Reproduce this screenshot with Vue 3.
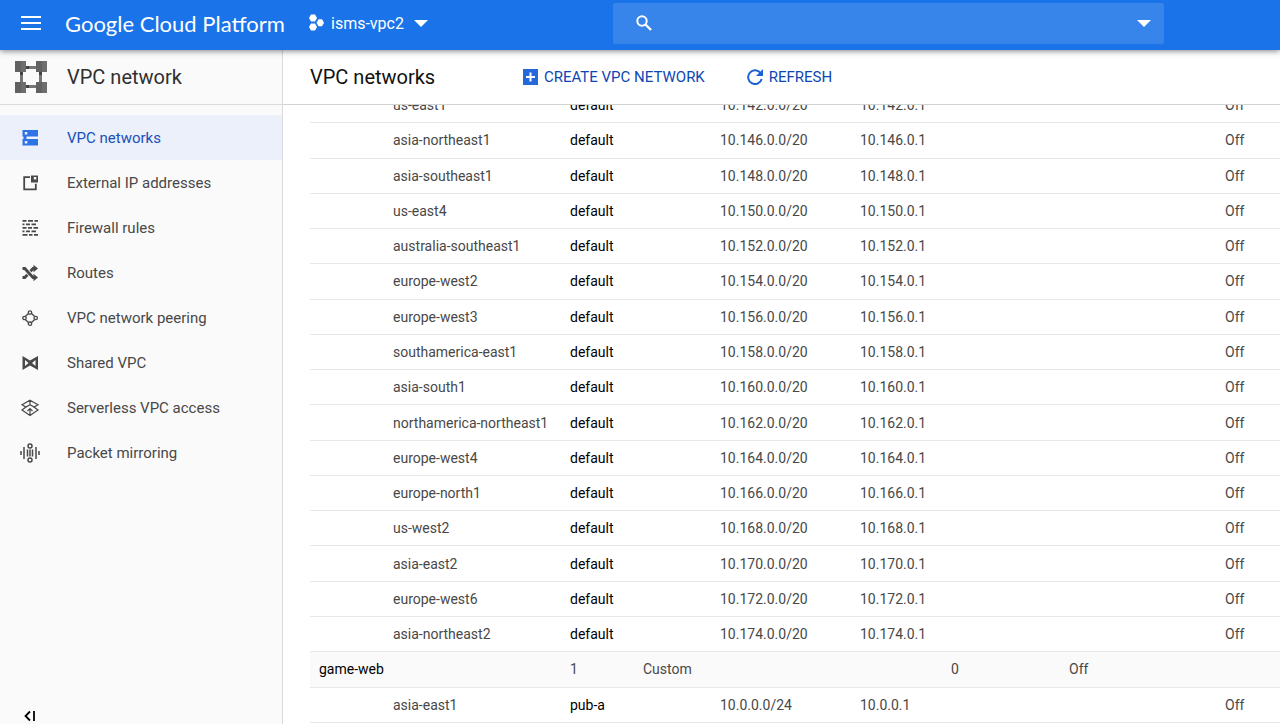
<script setup>
import { ref } from "vue";

const query = ref("");
const active = ref("VPC networks");

const navItems = [
  { label: "VPC networks", icon: "networks" },
  { label: "External IP addresses", icon: "external" },
  { label: "Firewall rules", icon: "firewall" },
  { label: "Routes", icon: "routes" },
  { label: "VPC network peering", icon: "peering" },
  { label: "Shared VPC", icon: "shared" },
  { label: "Serverless VPC access", icon: "serverless" },
  { label: "Packet mirroring", icon: "mirroring" },
];

const defaultRegions = [
  ["us-east1", 142],
  ["asia-northeast1", 146],
  ["asia-southeast1", 148],
  ["us-east4", 150],
  ["australia-southeast1", 152],
  ["europe-west2", 154],
  ["europe-west3", 156],
  ["southamerica-east1", 158],
  ["asia-south1", 160],
  ["northamerica-northeast1", 162],
  ["europe-west4", 164],
  ["europe-north1", 166],
  ["us-west2", 168],
  ["asia-east2", 170],
  ["europe-west6", 172],
  ["asia-northeast2", 174],
];

const rows = [
  ...defaultRegions.map(([region, block]) => ({
    region,
    subnet: "default",
    range: `10.${block}.0.0/20`,
    gateway: `10.${block}.0.1`,
    logs: "Off",
  })),
  { network: "game-web", count: 1, mode: "Custom", rules: 0, routing: "Off" },
  {
    region: "asia-east1",
    subnet: "pub-a",
    range: "10.0.0.0/24",
    gateway: "10.0.0.1",
    logs: "Off",
  },
];
</script>

<template>
  <div class="console">
    <header class="topbar">
      <button class="menu-button" aria-label="Main menu">
        <svg width="20" height="14" viewBox="0 0 20 14" fill="#fff">
          <path d="M0 0h20v2H0zM0 6h20v2H0zM0 12h20v2H0z" />
        </svg>
      </button>
      <a href="#" class="brand">Google Cloud Platform</a>
      <button class="project">
        <svg width="15" height="18" viewBox="0 0 15 18" fill="#fff">
          <path d="M2 .500h4L8 4 6 7.500H2L0 4z" />
          <path d="M9.500 5.200h3.500l2 3.500-2 3.500H9.500l-2-3.500z" />
          <path d="M2 9.500h4L8 13l-2 3.500H2L0 13z" />
        </svg>
        <span>isms-vpc2</span>
        <svg class="caret" width="14" height="7" viewBox="0 0 14 7" fill="#fff">
          <path d="M0 0h14L7 7z" />
        </svg>
      </button>
      <div class="search">
        <svg width="16" height="16" viewBox="0 0 16 16" fill="none" stroke="#fff">
          <circle cx="6" cy="6" r="4.7" stroke-width="2" />
          <path d="M9.500 9.500L15 15" stroke-width="2.4" />
        </svg>
        <input v-model="query" type="text" aria-label="Search" />
        <button aria-label="Search options">
          <svg width="14" height="7" viewBox="0 0 14 7" fill="#fff">
            <path d="M0 0h14L7 7z" />
          </svg>
        </button>
      </div>
    </header>

    <div class="body">
      <aside class="sidebar">
        <div class="product">
          <svg width="32" height="32" viewBox="0 0 32 32">
            <path d="M5 9h3v14H5zM24 9h3v14h-3zM9 5h14v3H9zM9 24h14v3H9z" fill="#757575" />
            <path d="M5 11h3v3H5zM24 11h3v3h-3zM11 5h3v3h-3zM11 24h3v3h-3z" fill="#424242" />
            <path d="M0 0h11v11H0zM21 0h11v11H21zM0 21h11v11H0zM21 21h11v11H21z" fill="#616161" />
            <path d="M6 0h5v11H6zM27 0h5v11h-5zM6 21h5v11H6zM27 21h5v11h-5z" fill="#6e6e6e" />
          </svg>
          <span>VPC network</span>
        </div>
        <nav>
          <a
            v-for="item in navItems"
            :key="item.label"
            href="#"
            :class="{ active: item.label === active }"
            @click.prevent="active = item.label"
          >
            <svg width="20" height="20" viewBox="0 0 20 20" fill="currentColor">
              <template v-if="item.icon === 'networks'">
                <path
                  fill-rule="evenodd"
                  d="M2.500 2h15.500v6.500H2.500zM4.800 4v2.500h2.500V4zM2.500 11h15.500v6.500H2.500zM4.800 13v2.500h2.500V13z"
                />
                <path d="M3.500 8h3v3.500h-3z" />
              </template>
              <template v-else-if="item.icon === 'external'">
                <path
                  d="M10 4.200H4.200v12.100h11.600v-5.500"
                  fill="none"
                  stroke="currentColor"
                  stroke-width="1.800"
                />
                <path fill-rule="evenodd" d="M11 2.500h7v7h-7zM13.800 4v2.500h2.500V4z" />
              </template>
              <path
                v-else-if="item.icon === 'firewall'"
                d="M2.500 2h4v1.700h-4zM8 2h5v1.700H8zM14.500 2H18v1.700h-3.500zM2.500 5.500h2v1.700h-2zM6 5.500h4v1.700H6zM11.500 5.500H16v1.700h-4.500zM2.500 9h4v1.700h-4zM8 9h4v1.700H8zM13.500 9H18v1.700h-4.500zM2.500 12.500h2v1.700h-2zM6 12.500h4v1.700H6zM11.500 12.500H16v1.700h-4.500zM2.500 16h5v1.700h-5zM9 16h3.500v1.700H9zM14 16h4v1.700h-4z"
              />
              <template v-else-if="item.icon === 'routes'">
                <path
                  d="M2.500 5.500h2.300l8.200 9h2M2.500 14.500h2.300l2.700-2.800M10.500 8.300L13 5.500h2"
                  fill="none"
                  stroke="currentColor"
                  stroke-width="2.800"
                />
                <path d="M13.500 1.800L18 5.500l-4.500 3.700zM13.500 10.800l4.500 3.700-4.500 3.700z" />
              </template>
              <g
                v-else-if="item.icon === 'peering'"
                fill="none"
                stroke="currentColor"
                stroke-width="1.300"
              >
                <path d="M8.500 5.500l-3 2.800M11.500 5.500l3 2.800M5.500 11.700l3 2.800M14.500 11.700l-3 2.800" />
                <circle cx="10" cy="4.500" r="1.700" />
                <circle cx="4.500" cy="10" r="1.700" />
                <circle cx="15.700" cy="10" r="1.700" />
                <circle cx="10" cy="15.700" r="1.700" />
              </g>
              <path
                v-else-if="item.icon === 'shared'"
                fill-rule="evenodd"
                d="M2.500 3L10 7.500 18 3v14l-8-4.500L2.500 17zM5 7v6l3.500-3zM15.500 7v6L12 10z"
              />
              <g
                v-else-if="item.icon === 'serverless'"
                fill="none"
                stroke="currentColor"
                stroke-width="1.200"
              >
                <path d="M10 2.200l8 4.600-4 2.300-4-2.300-4 2.300-4-2.300zM10 2.200v4.600" />
                <path d="M6 9.100L2 12l8 5.500 8-5.500-4-2.900M10 17v-6M7.500 13l2.500-2.500 2.500 2.500" />
              </g>
              <g v-else fill="none" stroke="currentColor" stroke-width="1.500">
                <circle cx="10" cy="3" r="2" />
                <circle cx="10" cy="17" r="2" />
                <path d="M1 8v4M4 4v12M7.500 6.500v7M10 6.500v7M12.500 6.500v7M16 4v12M19 8v4" />
              </g>
            </svg>
            <span>{{ item.label }}</span>
          </a>
        </nav>
        <button class="collapse" aria-label="Collapse menu">
          <svg width="12" height="12" viewBox="0 0 12 12" fill="none" stroke="#000" stroke-width="1.800">
            <path d="M6 1.500L1.500 6 6 10.500M10 1v10" />
          </svg>
        </button>
      </aside>

      <main class="content">
        <div class="toolbar">
          <h1>VPC networks</h1>
          <button class="action create">
            <svg width="15" height="16" viewBox="0 0 15 16">
              <path d="M0 0h15v16H0z" fill="#2468dc" />
              <path d="M3 8h9M7.500 3.500v9" stroke="#fff" stroke-width="2" />
            </svg>
            <span>CREATE VPC NETWORK</span>
          </button>
          <button class="action">
            <svg width="16" height="16" viewBox="0 0 16 16">
              <path
                d="M13.700 4.200A6.900 6.900 0 1 0 14.700 10"
                fill="none"
                stroke="#1a62d6"
                stroke-width="2"
              />
              <path d="M16 0v7H9z" fill="#1a62d6" />
            </svg>
            <span>REFRESH</span>
          </button>
        </div>
        <div class="table-area">
          <table>
            <colgroup>
              <col class="col-name" />
              <col class="col-region" />
              <col class="col-subnet" />
              <col class="col-mode" />
              <col class="col-range" />
              <col class="col-gateway" />
              <col class="col-rules" />
              <col />
              <col class="col-logs" />
            </colgroup>
            <tbody>
              <tr v-for="(row, i) in rows" :key="i" :class="{ network: row.network }">
                <td>
                  <a v-if="row.network" href="#">{{ row.network }}</a>
                </td>
                <td>{{ row.region }}</td>
                <td>
                  <a v-if="row.subnet" href="#">{{ row.subnet }}</a>
                  <template v-else>{{ row.count }}</template>
                </td>
                <td>{{ row.mode }}</td>
                <td>{{ row.range }}</td>
                <td>{{ row.gateway }}</td>
                <td>{{ row.rules }}</td>
                <td>{{ row.routing }}</td>
                <td>{{ row.logs }}</td>
              </tr>
            </tbody>
          </table>
        </div>
      </main>
    </div>
  </div>
</template>

<style>
body {
  margin: 0;
}
</style>

<style scoped>
.console {
  display: flex;
  flex-direction: column;
  height: 100vh;
  overflow: hidden;
  font-family: Roboto, sans-serif;
  color: #484848;
  background: #fff;
}
button {
  display: flex;
  align-items: center;
  padding: 0;
  border: none;
  background: none;
  font-family: inherit;
  cursor: pointer;
}
a {
  color: inherit;
  text-decoration: none;
}
svg {
  flex: none;
  display: block;
}

.topbar {
  z-index: 1;
  flex: none;
  display: flex;
  align-items: center;
  box-sizing: border-box;
  height: 50px;
  padding: 0 116px 4px 21px;
  background: #1a73e8;
  box-shadow: 0 1px 6px rgba(0, 0, 0, 0.5);
  color: #fff;
}
.brand {
  width: 220px;
  margin: 0 24px;
  font-family: Lato, sans-serif;
  font-size: 22px;
  white-space: nowrap;
}
.project {
  gap: 7px;
  width: 304px;
  color: #fff;
  font-size: 16px;
}
.caret {
  margin-left: 3px;
}
.search {
  flex: 1;
  display: flex;
  align-items: center;
  height: 41px;
  padding: 0 13px 0 23px;
  border-radius: 2px;
  background: #3784eb;
}
.search input {
  flex: 1;
  min-width: 0;
  margin: 0 12px;
  border: none;
  outline: none;
  background: none;
  color: #fff;
  font-family: inherit;
  font-size: 16px;
}

.body {
  flex: 1;
  display: flex;
  min-height: 0;
}
.sidebar {
  flex: none;
  display: flex;
  flex-direction: column;
  box-sizing: border-box;
  width: 283px;
  border-right: 1px solid #dadada;
  background: #fafafa;
}
.product {
  display: flex;
  align-items: center;
  gap: 20px;
  box-sizing: border-box;
  height: 55px;
  padding-left: 15px;
  border-bottom: 1px solid #dcdcdc;
  color: #303030;
  font-size: 20px;
}
nav {
  padding-top: 10px;
}
nav a {
  display: flex;
  align-items: center;
  gap: 27px;
  height: 45px;
  padding-left: 20px;
  font-size: 15px;
}
nav a.active {
  background: #ebf0fa;
  color: #1a4fba;
}
nav a.active svg {
  color: #2f74e6;
}
.collapse {
  margin: auto 0 2px 24px;
}

.content {
  flex: 1;
  display: flex;
  flex-direction: column;
  min-width: 0;
}
.toolbar {
  flex: none;
  display: flex;
  align-items: center;
  box-sizing: border-box;
  height: 55px;
  padding-left: 27px;
  border-bottom: 1px solid #d0d4d0;
}
h1 {
  width: 213px;
  margin: 0;
  color: #111;
  font-size: 20px;
  font-weight: 400;
}
.action {
  gap: 6px;
  color: #0d47b3;
  font-size: 15px;
  white-space: nowrap;
}
.create {
  margin-right: 42px;
}
.table-area {
  flex: 1;
  min-height: 0;
  padding-left: 27px;
  overflow: hidden;
}
table {
  width: 100%;
  height: calc(100% + 16px);
  margin-top: -17px;
  table-layout: fixed;
  border-spacing: 0;
  font-size: 14px;
}
td {
  height: 34px;
  padding: 0 0 0 9px;
  border-bottom: 1px solid #e8e8e8;
  white-space: nowrap;
}
td a {
  color: #000;
}
.network td {
  background: #fafafa;
}
.col-name {
  width: 74px;
}
.col-region {
  width: 177px;
}
.col-subnet {
  width: 73px;
}
.col-mode {
  width: 77px;
}
.col-range {
  width: 140px;
}
.col-gateway {
  width: 91px;
}
.col-rules {
  width: 118px;
}
.col-logs {
  width: 64px;
}
</style>
